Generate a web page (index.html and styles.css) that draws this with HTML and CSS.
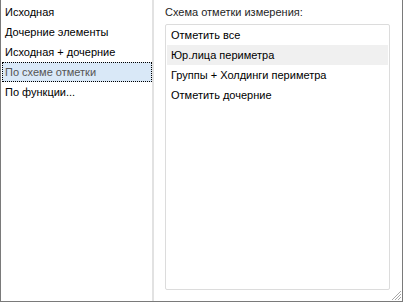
FILE: index.html
```html
<!DOCTYPE html>
<html lang="ru">
<head>
    <meta charset="UTF-8">
    <title>Схема отметки</title>
    <link rel="stylesheet" href="styles.css">
</head>
<body>
    <div class="frame">
        <!-- Список режимов -->
        <ul class="modes">
            <li>Исходная</li>
            <li>Дочерние элементы</li>
            <li>Исходная + дочерние</li>
            <li class="selected">По схеме отметки</li>
            <li>По функции...</li>
        </ul>

        <div class="splitter"></div>

        <div class="scheme">
            <div class="scheme-label">Схема отметки измерения:</div>
            <ul class="scheme-list">
                <li>Отметить все</li>
                <li class="hover">Юр.лица периметра</li>
                <li>Группы + Холдинги периметра</li>
                <li>Отметить дочерние</li>
            </ul>
        </div>

        <svg class="grip" width="12" height="12" viewBox="0 0 12 12">
            <path d="M11 2 L2 11 M11 5 L5 11 M11 8 L8 11" stroke="#a8a8a8" stroke-width="1" fill="none"/>
        </svg>
    </div>
</body>
</html>
```

FILE: styles.css
```css
body {
    margin: 0;
    font-family: 'Liberation Sans', Arial, sans-serif;
    font-size: 11px;
    color: #000;
    background: #fff;
}

.frame {
    position: relative;
    display: flex;
    width: 403px;
    height: 302px;
    box-sizing: border-box;
    border: 1px solid #7a7a7a;
    border-top: none;
    background: #fff;
}

ul {
    list-style: none;
    margin: 0;
    padding: 0;
}

/* Левая колонка */
.modes {
    width: 151px;
    padding-top: 2px;
}

.modes li {
    height: 20px;
    line-height: 20px;
    padding-left: 4px;
    box-sizing: border-box;
    white-space: nowrap;
}

.modes li.selected {
    margin-left: 1px;
    padding-left: 3px;
    background: #d9e8f7;
    color: #555;
    outline: 1px dotted #000;
    outline-offset: -1px;
}

.splitter {
    width: 2px;
    background: #e2e2e2;
}

/* Правая колонка */
.scheme {
    flex: 1;
    display: flex;
    flex-direction: column;
    padding: 2px 12px 11px 11px;
}

.scheme-label {
    height: 20px;
    line-height: 20px;
    color: #1e1e1e;
    margin-bottom: 2px;
}

.scheme-list {
    flex: 1;
    border: 1px solid #dcdcdc;
    border-radius: 2px;
    padding: 0 1px;
}

.scheme-list li {
    height: 20px;
    line-height: 20px;
    padding-left: 4px;
    white-space: nowrap;
}

.scheme-list li.hover {
    background: #f0f0f0;
}

.grip {
    position: absolute;
    right: 0;
    bottom: 0;
}
```
